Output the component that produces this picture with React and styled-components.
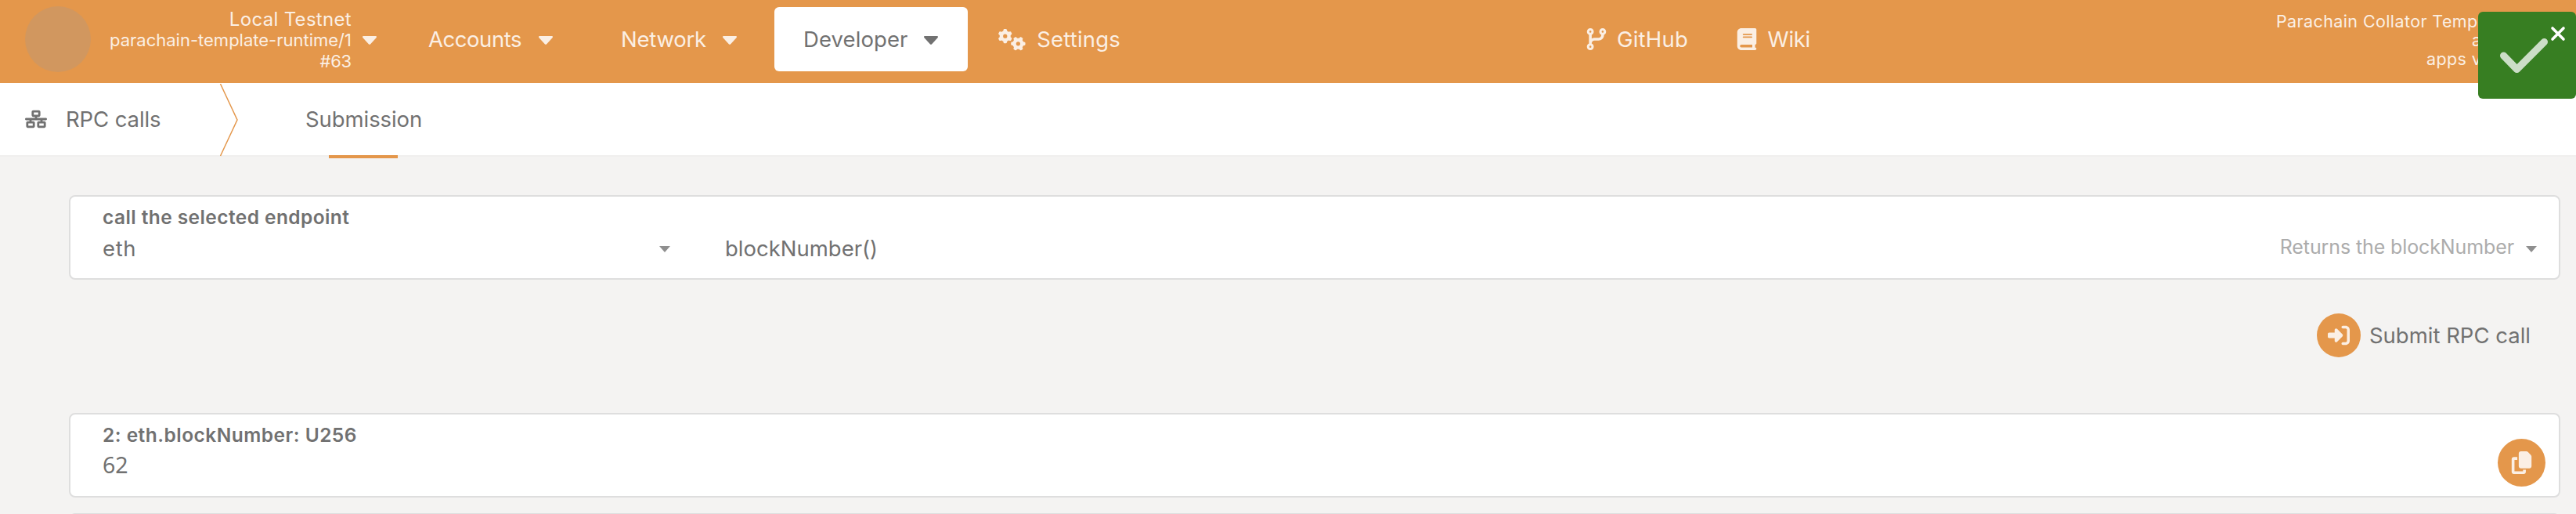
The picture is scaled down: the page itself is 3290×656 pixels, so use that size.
import React from "react";
import styled, { createGlobalStyle } from "styled-components";
import { FaNetworkWired, FaGears, FaCodeBranch, FaBook, FaRightToBracket, FaCopy } from "react-icons/fa6";

const orange = "#e4974b";
const cream = "#fbefe4";
const grey = "#717171";

const GlobalStyle = createGlobalStyle`
  * { box-sizing: border-box; }
  body {
    margin: 0;
    height: 656px;
    overflow: hidden;
    background: #f4f3f2;
    color: ${grey};
    font-family: Inter, "Liberation Sans", sans-serif;
    font-size: 27.5px;
  }
`;

const Page = styled.div`
  position: relative;
  width: 3290px;
  height: 656px;
  overflow: hidden;
`;

const Text = styled.span`
  display: block;
  white-space: nowrap;
  letter-spacing: ${(p) => p.$track || 0}px;
`;

const Header = styled.header`
  display: flex;
  align-items: center;
  height: 106px;
  padding: 0 0 6px 32px;
  background: ${orange};
  color: ${cream};
`;

const ChainLogo = styled.div`
  width: 84px;
  height: 84px;
  border-radius: 50%;
  background: #d1975f;
`;

const ChainInfo = styled.div`
  display: flex;
  flex-direction: column;
  align-items: flex-end;
  width: 333px;
  margin-right: 14px;
  padding-top: 2px;
  line-height: 27px;
  font-size: 22px;
`;

const ChainName = styled(Text)`
  font-size: 24px;
`;

const NavItem = styled.div`
  display: flex;
  align-items: center;
  justify-content: space-between;
  width: ${(p) => p.$width}px;
  margin-left: ${(p) => p.$gap}px;
`;

const ActiveNavItem = styled(NavItem)`
  height: 82px;
  padding: 0 38px 0 37px;
  border-radius: 6px;
  background: #fff;
  color: ${grey};
`;

const CaretIcon = styled.svg`
  display: block;
  flex: none;
  width: 18px;
  height: 11px;
  margin-top: 3px;
`;

const Caret = () => (
  <CaretIcon viewBox="0 0 18 11">
    <path d="M1.2 0H16.8C18 0 18.3 1.4 17.5 2.2L10.2 10.2Q9 11.3 7.8 10.2L.5 2.2C-.3 1.4 0 0 1.2 0Z" fill="currentColor" />
  </CaretIcon>
);

const VersionInfo = styled.div`
  margin-left: 595px;
  padding-top: 2px;
  font-size: 21.5px;
  line-height: 24px;
`;

const VersionLine = styled(Text)`
  padding-left: ${(p) => p.$indent || 0}px;
`;

const SubNav = styled.nav`
  display: flex;
  align-items: center;
  height: 92px;
  padding-left: 32px;
  background: #fff;
`;

const SectionTitle = styled.div`
  display: flex;
  align-items: center;
  gap: 24px;
  width: 249px;
`;

const ChevronIcon = styled.svg`
  display: block;
  width: 24px;
  height: 92px;
  overflow: visible;
`;

const Tab = styled.div`
  display: flex;
  flex-direction: column;
  align-items: center;
  justify-content: space-between;
  height: 96px;
  margin: 4px 0 0 85px;
  padding-top: 29px;
`;

const TabBar = styled.div`
  width: 88px;
  height: 4px;
  margin-right: 2px;
  background: ${orange};
`;

const Main = styled.main`
  height: 458px;
  padding: 49px 20px 0 88px;
  border-top: 2px solid #f0efee;
`;

const Card = styled.section`
  height: 108px;
  padding: 10px 28px 0 41px;
  border: 2px solid #dedede;
  border-radius: 8px;
  background: #fff;
`;

const FieldLabel = styled(Text)`
  font-size: 24.5px;
  font-weight: 600;
  line-height: 32px;
`;

const FieldRow = styled.div`
  display: flex;
  align-items: center;
  height: 48px;
`;

const SelectBox = styled.div`
  display: flex;
  align-items: center;
  justify-content: space-between;
  width: 725px;
  margin-right: 70px;
`;

const Hint = styled(Text)`
  margin: -5px 15px 0 auto;
  font-size: 25px;
  color: #acacac;
`;

const SmallCaret = styled.span`
  flex: none;
  width: 14px;
  height: 8px;
  margin-top: 2px;
  background: #8f8f8f;
  clip-path: polygon(0 0, 100% 0, 50% 100%);
`;

const Actions = styled.div`
  display: flex;
  align-items: center;
  justify-content: flex-end;
  gap: 11px;
  height: 56px;
  margin: 43px 38px 71px 0;
`;

const RoundButton = styled.button`
  display: flex;
  align-items: center;
  justify-content: center;
  width: ${(p) => p.$size}px;
  height: ${(p) => p.$size}px;
  padding: 0;
  border: 0;
  border-radius: 50%;
  background: ${orange};
  color: ${cream};
`;

const ResultCard = styled(Card)`
  display: flex;
  justify-content: space-between;
  margin-bottom: 20px;
  padding-right: 17px;
`;

const CopyButton = styled(RoundButton)`
  margin-top: 21px;
`;

const ResultValue = styled(Text)`
  font-family: "Noto Sans", sans-serif;
  font-size: 28.5px;
  line-height: 45px;
`;

const Toast = styled.div`
  position: absolute;
  top: 15px;
  right: 0;
  width: 125px;
  height: 111px;
  border-radius: 6px;
  background: #377e22;
`;

export default function App() {
  return (
    <Page>
      <GlobalStyle />
      <Header>
        <ChainLogo />
        <ChainInfo>
          <ChainName $track={0.31}>Local Testnet</ChainName>
          <Text>parachain-template-runtime/1</Text>
          <Text $track={-0.2}>#63</Text>
        </ChainInfo>
        <Caret />
        <NavItem $width={159} $gap={66}>
          <Text $track={-0.45}>Accounts</Text>
          <Caret />
        </NavItem>
        <NavItem $width={148} $gap={87}>
          <Text $track={-0.24}>Network</Text>
          <Caret />
        </NavItem>
        <ActiveNavItem $width={247} $gap={48}>
          <Text $track={0.09}>Developer</Text>
          <Caret />
        </ActiveNavItem>
        <NavItem $width={156} $gap={39}>
          <FaGears size={35} />
          <Text $track={0.18}>Settings</Text>
        </NavItem>
        <NavItem $width={131} $gap={594}>
          <FaCodeBranch size={28} />
          <Text $track={0.23}>GitHub</Text>
        </NavItem>
        <NavItem $width={95} $gap={61}>
          <FaBook size={28} />
          <Text $track={-0.28}>Wiki</Text>
        </NavItem>
        <VersionInfo>
          <VersionLine $track={0.39}>Parachain Collator Temp</VersionLine>
          <VersionLine $track={0.39} $indent={250}>a</VersionLine>
          <VersionLine $track={0.39} $indent={192}>apps v</VersionLine>
        </VersionInfo>
      </Header>

      <SubNav>
        <SectionTitle>
          <FaNetworkWired size={28} />
          <Text $track={-0.1}>RPC calls</Text>
        </SectionTitle>
        <ChevronIcon viewBox="0 0 24 92">
          <path d="M.5 1L22 47L.5 93" fill="none" stroke={orange} strokeWidth="1.5" />
        </ChevronIcon>
        <Tab>
          <Text $track={-0.07}>Submission</Text>
          <TabBar />
        </Tab>
      </SubNav>

      <Main>
        <Card>
          <FieldLabel $track={0.42}>call the selected endpoint</FieldLabel>
          <FieldRow>
            <SelectBox>
              <Text $track={0.6}>eth</Text>
              <SmallCaret />
            </SelectBox>
            <Text>blockNumber()</Text>
            <Hint $track={-0.11}>Returns the blockNumber</Hint>
            <SmallCaret />
          </FieldRow>
        </Card>

        <Actions>
          <RoundButton $size={56}>
            <FaRightToBracket size={28} />
          </RoundButton>
          <Text>Submit RPC call</Text>
        </Actions>

        <ResultCard>
          <div>
            <FieldLabel $track={0.47}>2: eth.blockNumber: U256</FieldLabel>
            <ResultValue>62</ResultValue>
          </div>
          <CopyButton $size={61}>
            <FaCopy size={29} />
          </CopyButton>
        </ResultCard>
        <Card />
      </Main>

      <Toast>
        <svg width="125" height="111" viewBox="0 0 125 111" fill="none">
          <path d="M32.500 56L49.500 73.500L84.500 38.500" stroke="#fff" strokeOpacity=".75" strokeWidth="9" strokeLinecap="round" strokeLinejoin="round" />
          <path d="M95 21L109 35M109 21L95 35" stroke="#fff" strokeWidth="3.6" strokeLinecap="round" />
        </svg>
      </Toast>
    </Page>
  );
}
